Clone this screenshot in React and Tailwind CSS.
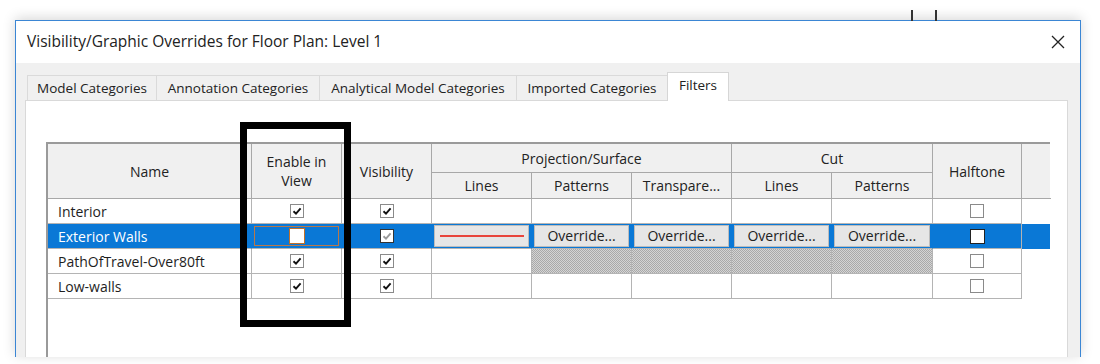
import React from 'react';

const FONT = { fontFamily: '"Open Sans", "Noto Sans", "Liberation Sans", sans-serif' };

function Check({ checked = true, variant = 'normal' }) {
  // small win32-style check box
  const box =
    variant === 'selected'
      ? 'border-[#333] bg-white'
      : variant === 'focus'
      ? 'border-[#c0702a] bg-white w-[16px] h-[16px]'
      : variant === 'selectedWhite'
      ? 'border-[#222] bg-white w-[15px] h-[15px]'
      : 'border-[#8a8a8a] bg-white';
  const tick = variant === 'selected' ? '#9a9a9a' : '#111';
  return (
    <span className={`inline-flex items-center justify-center w-[14px] h-[14px] border ${box}`}>
      {checked && (
        <svg width="10" height="10" viewBox="0 0 10 10">
          <path d="M1.5 5.2 L4 7.6 L8.6 2.4" fill="none" stroke={tick} strokeWidth="1.9" />
        </svg>
      )}
    </span>
  );
}

function OverrideBtn() {
  return (
    <div className="h-full w-full px-[2px] py-[1px] flex">
      <div className="flex-1 flex items-center justify-center bg-[#e6e6e6] border border-[#bcbcbc] text-[14px] text-[#222] leading-none">
        Override...
      </div>
    </div>
  );
}

const hatch = 'bg-[#bdbdbd] bg-[image:repeating-conic-gradient(#a9a9a9_0_25%,#d4d4d4_0_50%)] bg-[length:2px_2px]';

const COLS = 'grid-cols-[204px_90px_90px_100px_100px_100px_100px_101px_89px]';

function Row({ name, enable, visible, selected, hatched }) {
  const cell = `border-r border-b border-[#b4b4b4] flex items-center justify-center h-[25px]`;
  if (selected) {
    return (
      <div className={`grid ${COLS} bg-[#0a78d6] text-white`}>
        <div className={`${cell} justify-start pl-[10px] text-[14px] border-r-[#0a78d6]`}>{name}</div>
        <div className={`${cell} p-[2px] border-r-[#0a78d6]`}>
          <div className="w-full h-full border border-[#b8784a] flex items-center justify-center">
            <Check checked={false} variant="focus" />
          </div>
        </div>
        <div className={`${cell} border-r-[#0a78d6]`}>
          <Check variant="selected" />
        </div>
        <div className={`${cell} px-[2px] py-[1px] border-r-[#0a78d6]`}>
          <div className="w-full h-full bg-[#e6e6e6] border border-[#bcbcbc] flex items-center justify-center">
            <div className="w-[84px] h-[2px] bg-[#e8453c]" />
          </div>
        </div>
        <div className={`${cell} border-r-[#0a78d6]`}><OverrideBtn /></div>
        <div className={`${cell} border-r-[#0a78d6]`}><OverrideBtn /></div>
        <div className={`${cell} border-r-[#0a78d6]`}><OverrideBtn /></div>
        <div className={`${cell} border-r-[#0a78d6]`}><OverrideBtn /></div>
        <div className={cell}>
          <Check checked={false} variant="selectedWhite" />
        </div>
      </div>
    );
  }
  return (
    <div className={`grid ${COLS} text-[#1e1e1e]`}>
      <div className={`${cell} justify-start pl-[10px] text-[14px]`}>{name}</div>
      <div className={cell}><Check checked={enable} /></div>
      <div className={cell}><Check checked={visible} /></div>
      <div className={cell} />
      <div className={`${cell} ${hatched ? hatch : ''}`} />
      <div className={`${cell} ${hatched ? hatch : ''}`} />
      <div className={`${cell} ${hatched ? hatch : ''}`} />
      <div className={`${cell} ${hatched ? hatch : ''}`} />
      <div className={cell}><Check checked={false} variant="normal" /></div>
    </div>
  );
}

export default function App() {
  const tabs = [
    ['Model Categories', 'w-[130px]', ''],
    ['Annotation Categories', 'w-[164px]', ''],
    ['Analytical Model Categories', 'w-[198px]', 'bg-[#d8e9f8] border-[#c4dcf2]'],
    ['Imported Categories', 'w-[152px]', ''],
  ];
  const h = 'border-r border-b border-[#a8a8a8] flex items-center justify-center text-center leading-[19px]';

  return (
    <div className="relative w-[1100px] h-[364px] bg-white overflow-hidden text-[#1e1e1e]" style={FONT}>
      {/* bits of the window behind */}
      <div className="absolute left-[911px] top-[10px] w-[2px] h-[11px] bg-[#333]" />
      <div className="absolute left-[935px] top-[10px] w-[2px] h-[11px] bg-[#333]" />

      <div className="pt-[20px] pl-[15px]">
        <div className="w-[1066px] h-[337px] border border-b-0 border-[#3b86d4] shadow-[0_-2px_12px_rgba(0,0,0,0.16)] flex flex-col bg-[#f0f0f0]">
          {/* title bar */}
          <div className="h-[42px] shrink-0 bg-white flex items-center justify-between pl-[11px] pr-[14px]">
            <span className="text-[15.5px] text-[#222]">Visibility/Graphic Overrides for Floor Plan: Level 1</span>
            <svg width="16" height="16" viewBox="0 0 16 16">
              <path d="M2 2 L14 14 M14 2 L2 14" stroke="#222" strokeWidth="1.3" />
            </svg>
          </div>

          {/* tabs */}
          <div className="flex shrink-0 items-end pl-[11px] h-[37px]">
            {tabs.map(([label, w, extra]) => (
              <div
                key={label}
                className={`${w} h-[25px] border border-b-0 border-[#dadada] bg-[#f0f0f0] flex items-center justify-center text-[13.5px] text-[#222] -mr-px ${extra}`}
              >
                {label}
              </div>
            ))}
            <div className="w-[62px] h-[29px] border border-b-0 border-[#d6d6d6] bg-white flex items-center justify-center text-[13.5px] text-[#222] relative top-px pb-[4px]">
              Filters
            </div>
          </div>

          {/* tab panel */}
          <div className="flex-1 min-h-0 ml-[9px] mr-[12px] bg-white border border-b-0 border-[#d9d9d9] pl-[20px] pt-[41px]">
            <div className="h-full w-[1004px] border-l-2 border-t-2 border-[#9a9a9a] flex flex-col">
              {/* header */}
              <div className="grid grid-cols-[204px_90px_90px_100px_100px_100px_100px_101px_89px_29px] grid-rows-[29px_26px] bg-[#f0f0f0] text-[14px] text-[#222]">
                <div className={`${h} row-span-2`}>Name</div>
                <div className={`${h} row-span-2`}>Enable in<br />View</div>
                <div className={`${h} row-span-2`}>Visibility</div>
                <div className={`${h} col-span-3`}>Projection/Surface</div>
                <div className={`${h} col-span-2`}>Cut</div>
                <div className={`${h} row-span-2`}>Halftone</div>
                <div className={`${h} row-span-2 border-r-0`} />
                <div className={h}>Lines</div>
                <div className={h}>Patterns</div>
                <div className={h}>Transpare...</div>
                <div className={h}>Lines</div>
                <div className={h}>Patterns</div>
              </div>

              <Row name="Interior" enable visible />
              <Row name="Exterior Walls" selected />
              <Row name="PathOfTravel-Over80ft" enable visible hatched />
              <Row name="Low-walls" enable visible />
            </div>
          </div>
        </div>
      </div>

      {/* highlight around the Enable in View column */}
      <div className="absolute left-[240px] top-[122px] w-[111px] h-[205px] border-[7px] border-black" />
    </div>
  );
}
